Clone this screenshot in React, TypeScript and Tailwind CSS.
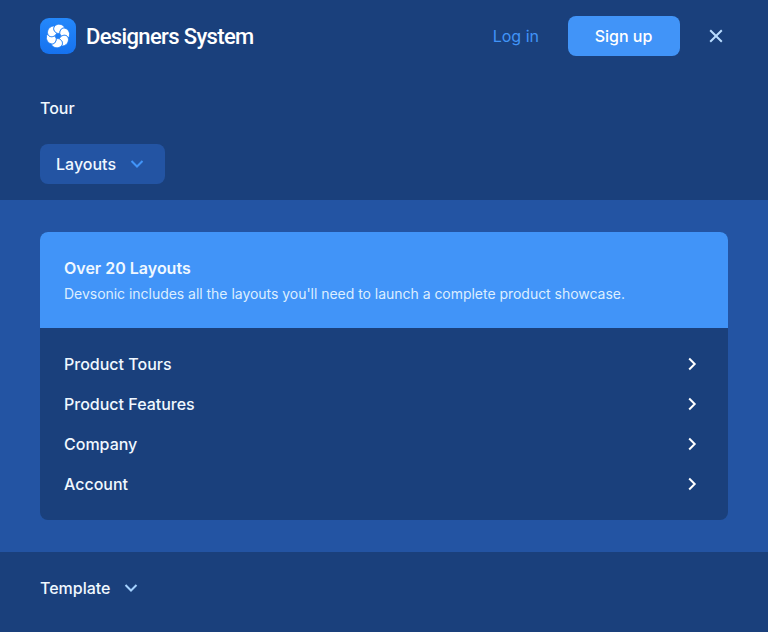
import React from 'react';

const petals = [0, 60, 120, 180, 240, 300];

function Logo() {
  return (
    <svg width="36" height="36" viewBox="0 0 36 36" aria-hidden="true">
      <defs>
        <linearGradient id="tile" x1="0" y1="0" x2="0" y2="1">
          <stop offset="0" stopColor="#2488fb" />
          <stop offset="1" stopColor="#1672ef" />
        </linearGradient>
      </defs>
      <rect width="36" height="36" rx="9" fill="url(#tile)" />
      {petals.map((angle) => (
        <path
          key={angle}
          d="M-1.2 -2.8C-4.5 -4.5 -5.4 -8 -3.2 -10C-0.8 -12.6 5 -12.6 7.06 -7.77C4.23 -8.68 1.65 -6.15 1.82 -2.44Z"
          fill="#fff"
          stroke="#1d7df5"
          strokeWidth="0.75"
          strokeLinejoin="round"
          transform={`translate(18 18) rotate(${angle})`}
        />
      ))}
    </svg>
  );
}

function Chevron({ className, d }: { className: string; d: string }) {
  return (
    <svg
      width="16"
      height="16"
      viewBox="0 0 16 16"
      fill="none"
      stroke="currentColor"
      strokeWidth="2"
      className={className}
      aria-hidden="true"
    >
      <path d={d} />
    </svg>
  );
}

const down = 'M2.5 5L8 10.5L13.5 5';
const right = 'M5.2 2.5L10.7 8L5.2 13.5';
const links = ['Product Tours', 'Product Features', 'Company', 'Account'];

export default function App() {
  return (
    <div className="h-[632px] w-[768px] overflow-hidden bg-[#1a407c] font-['Inter',sans-serif] text-base leading-6 font-medium text-[#f0f8ff]">
      <header className="flex h-[72px] items-center pr-10 pl-10">
        <Logo />
        <span className="ml-2.5 pt-0.5 font-['Roboto',sans-serif] text-[22px] font-medium tracking-[-0.64px] text-white">
          Designers System
        </span>
        <a className="ml-auto font-normal text-[#4194f8]">Log in</a>
        <button className="ml-[29px] h-10 w-28 rounded-lg bg-[#4194f8] pr-px text-white">Sign up</button>
        <button className="ml-6 flex size-6 items-center justify-center text-[#b9dcff]" aria-label="Close">
          <svg width="14" height="14" viewBox="0 0 14 14" fill="none" stroke="currentColor" strokeWidth="2">
            <path d="M1.2 1.2L12.8 12.8M12.8 1.2L1.2 12.8" />
          </svg>
        </button>
      </header>
      <nav>
        <div className="flex h-32 flex-col items-start px-10 pt-6">
          <a>Tour</a>
          <button className="mt-6 flex h-10 w-[125px] items-center rounded-lg bg-[#2354a3] pl-4">
            Layouts
            <Chevron d={down} className="ml-[13px] text-[#4194f8]" />
          </button>
        </div>
        <section className="h-[352px] bg-[#2354a3] px-10 py-8">
          <div className="h-72 overflow-hidden rounded-lg bg-[#1a407c]">
            <div className="h-24 bg-[#4194f8] px-6 pt-6">
              <h2 className="font-semibold">Over 20 Layouts</h2>
              <p className="mt-1 text-sm leading-5 font-normal tracking-[-0.03px] text-[#dceeff]">
                Devsonic includes all the layouts you'll need to launch a complete product showcase.
              </p>
            </div>
            <ul className="px-6 py-4">
              {links.map((label) => (
                <li key={label} className="flex h-10 items-center justify-between pr-1">
                  {label}
                  <Chevron d={right} className="text-white" />
                </li>
              ))}
            </ul>
          </div>
        </section>
        <div className="flex h-[72px] items-center px-10">
          Template
          <Chevron d={down} className="ml-3 text-[#a5d2ff]" />
        </div>
      </nav>
    </div>
  );
}
